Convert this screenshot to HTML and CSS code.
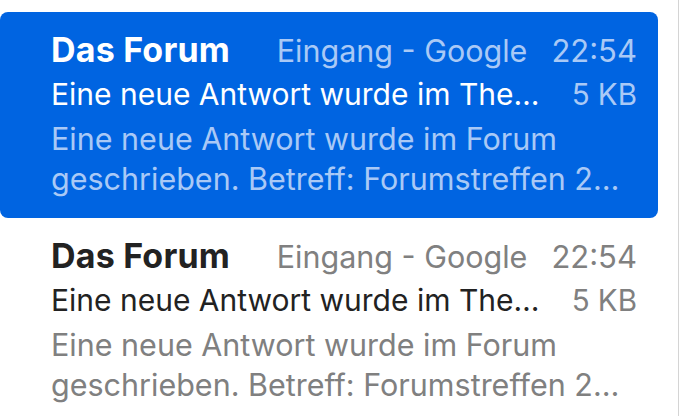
FILE: index.html
```html
<!DOCTYPE html>
<html lang="de">
<head>
<meta charset="utf-8">
<title>Mail</title>
<link rel="stylesheet" href="styles.css">
</head>
<body>
<div class="pane">
  <div class="list">
    <div class="item selected">
      <div class="row-top">
        <span class="sender">Das Forum</span>
        <span class="mailbox">Eingang - Google</span>
        <span class="time">22:54</span>
      </div>
      <div class="row-subject">
        <span class="subject">Eine neue Antwort wurde im Thema Forumstreffen geschrieben</span>
        <span class="size">5 KB</span>
      </div>
      <div class="preview">
        <div class="preview-line">Eine neue Antwort wurde im Forum</div>
        <div class="preview-line">geschrieben. Betreff: Forumstreffen 2024 – bitte bis Freitag anmelden.</div>
      </div>
    </div>
    <div class="item">
      <div class="row-top">
        <span class="sender">Das Forum</span>
        <span class="mailbox">Eingang - Google</span>
        <span class="time">22:54</span>
      </div>
      <div class="row-subject">
        <span class="subject">Eine neue Antwort wurde im Thema Forumstreffen geschrieben</span>
        <span class="size">5 KB</span>
      </div>
      <div class="preview">
        <div class="preview-line">Eine neue Antwort wurde im Forum</div>
        <div class="preview-line">geschrieben. Betreff: Forumstreffen 2024 – bitte bis Freitag anmelden.</div>
      </div>
    </div>
  </div>
  <div class="divider"></div>
</div>
</body>
</html>
```
FILE: styles.css
```css
html, body {
  margin: 0;
  padding: 0;
  background: #ffffff;
  height: 100%;
  overflow: hidden;
}
body {
  font-family: Inter, "Noto Sans", "Liberation Sans", sans-serif;
  -webkit-font-smoothing: antialiased;
}
.pane {
  display: flex;
  height: 100%;
}
.list {
  width: 658px;
  padding-top: 12px;
  flex: none;
}
.divider {
  margin-left: 20px;
  width: 1px;
  background: #d4d4d4;
  align-self: stretch;
}
.item {
  box-sizing: border-box;
  height: 206px;
  padding: 16px 21px 0 51px;
  border-radius: 8px;
  color: #222222;
}
.item.selected {
  background: #0064e1;
  color: #ffffff;
}
.row-top {
  display: flex;
  align-items: baseline;
  line-height: 44px;
  height: 44px;
}
.sender {
  flex: 1;
  font-size: 34px;
  font-weight: 700;
  letter-spacing: 0.2px;
}
.mailbox {
  font-size: 30.5px;
  color: #808080;
  margin-right: 24px;
}
.time {
  font-size: 31px;
  color: #808080;
}
.row-subject {
  display: flex;
  align-items: baseline;
  line-height: 45px;
  height: 45px;
}
.subject {
  flex: 1;
  min-width: 0;
  font-size: 30px;
  white-space: nowrap;
  overflow: hidden;
  text-overflow: ellipsis;
  margin-right: 26px;
}
.size {
  font-size: 29.5px;
  color: #808080;
}
.preview {
  margin-top: 2px;
  font-size: 30.5px;
  line-height: 40px;
  color: #808080;
  padding-right: 14px;
}
.preview-line {
  white-space: nowrap;
  overflow: hidden;
  text-overflow: ellipsis;
}
.selected .mailbox,
.selected .time,
.selected .size,
.selected .preview {
  color: #a9c9f6;
}
```
